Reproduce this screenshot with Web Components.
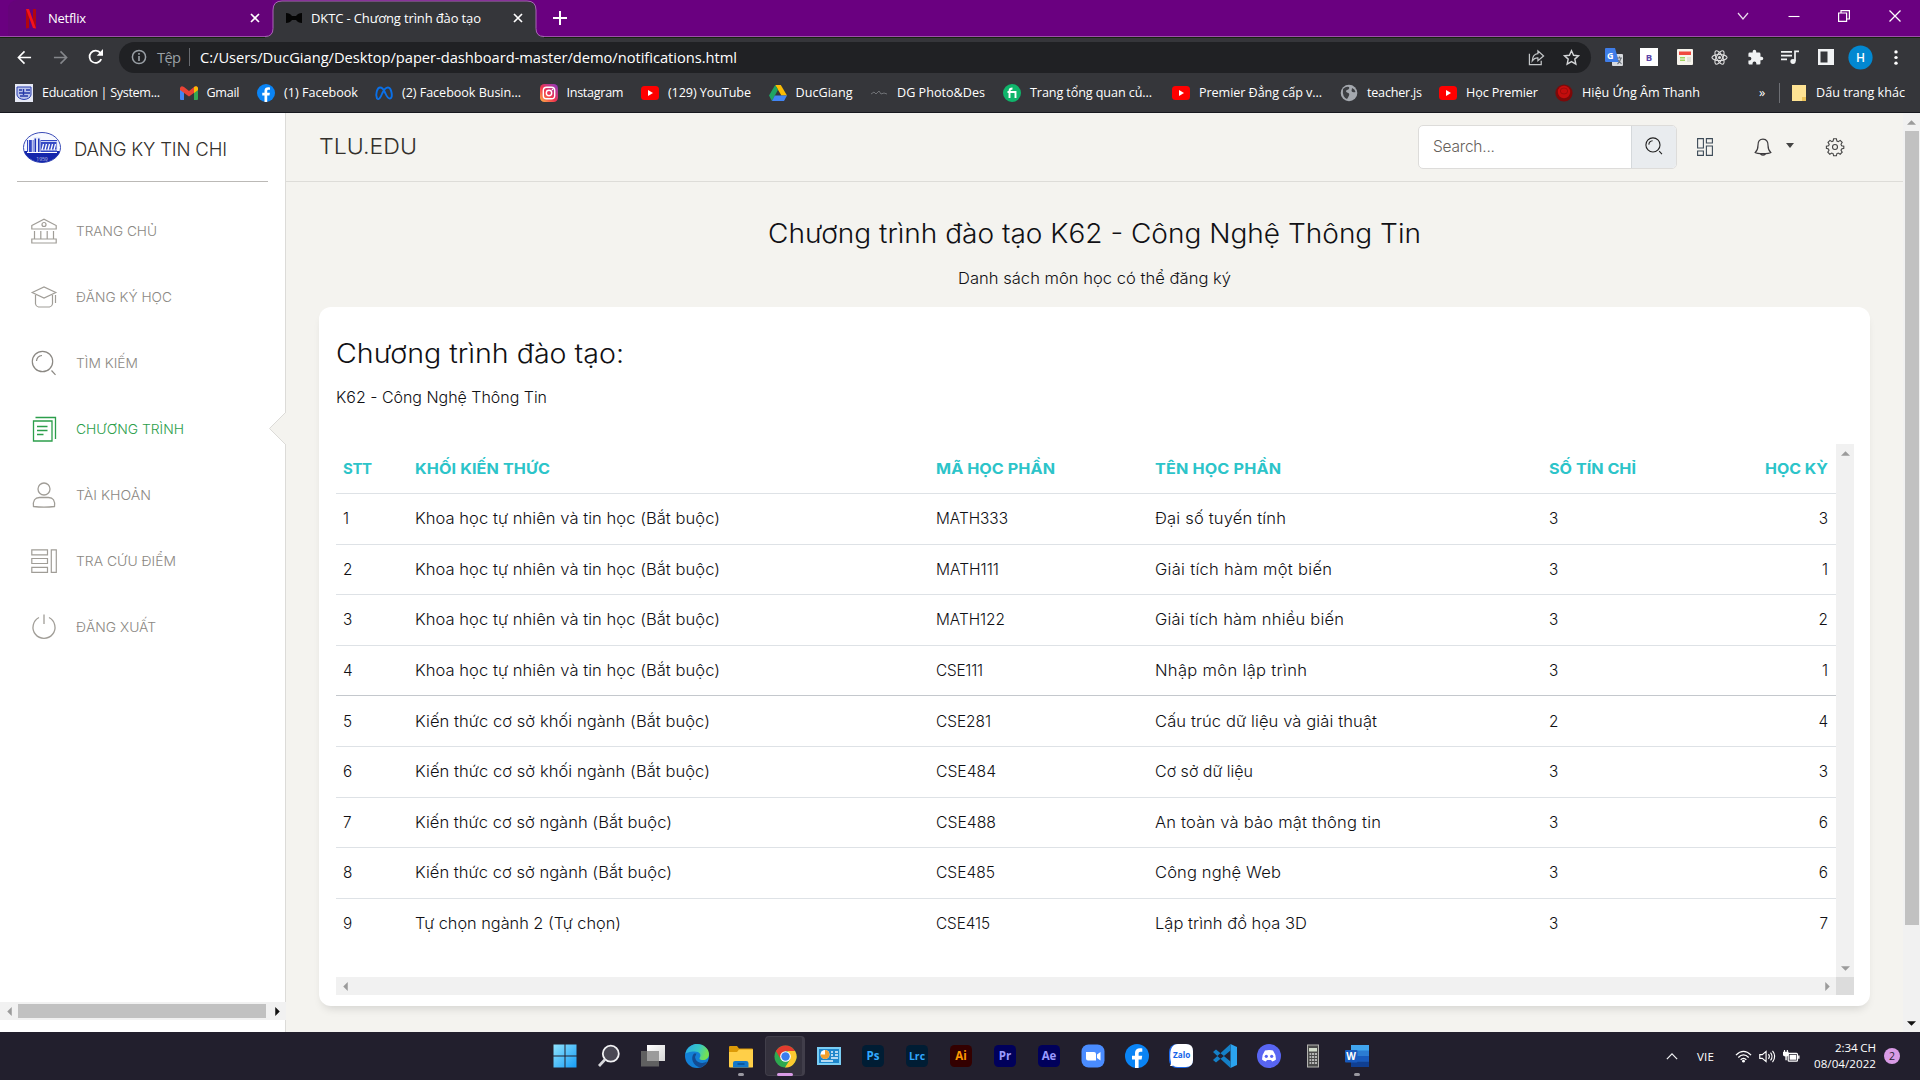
<!DOCTYPE html>
<html lang="vi">
<head>
<meta charset="utf-8">
<title>DKTC - Chương trình đào tạo</title>
<style>
html,body{margin:0;width:1920px;height:1080px;overflow:hidden}
body{display:flex;flex-direction:column;background:#f4f3ef;font-family:"Open Sans","Noto Sans",sans-serif}
</style>
</head>
<body>
<browser-tabs></browser-tabs>
<browser-toolbar></browser-toolbar>
<bookmark-bar></bookmark-bar>
<page-view>
  <side-bar slot="side"></side-bar>
  <nav-bar slot="nav"></nav-bar>
  <course-card slot="content"></course-card>
</page-view>
<task-bar></task-bar>
<script>
const YT='<rect y="2" width="18" height="14" rx="3.5" fill="#f00"/><path d="M7 6l5 3-5 3z" fill="#fff"/>';
const FB='<circle cx="12" cy="12" r="12" fill="#0a84f5"/><path d="M13.6 24v-8.6h3l.6-3.6h-3.6V9.6c0-1.200.6-1.900 2-1.900h1.700V4.500c-4.400-.8-7.300.5-7.300 4.600v2.700H7v3.600h3V24z" fill="#fff"/>';
const adobe=(bg,fg,t,s=11.5)=>'<rect x="1" y="1" width="22" height="22" rx="4.500" fill="'+bg+'"/><text x="12" y="16" text-anchor="middle" font-family="Open Sans" font-weight="700" font-size="'+s+'" fill="'+fg+'">'+t+'</text>';
const S=(d,c='#fff',w=1.5)=>'<path d="'+d+'" fill="none" stroke="'+c+'" stroke-width="'+w+'"/>';
const ICONS={
 netflix:['0 0 10 18','<path d="M0 0h3v18l-3 .4zM7 0h3v18.400L7 18z" fill="#b1060f"/><path d="M0 0h3l7 18.400-3-.4z" fill="#f5121d"/>'],
 bow:['0 0 16 12','<path d="M0 1q4 0 6 3h4q2-3 6-3v10q-4 0-6-3H6q-2 3-6 3z" fill="#050505"/>'],
 x:['0 0 10 10',S('M1 1l8 8M9 1l-8 8','#fff',1.700)],
 plus:['0 0 14 14',S('M7 0v14M0 7h14','#fff',2)],
 chev:['0 0 12 8',S('M1 1l5 6 5-6','#e9dcec',1.200)],
 min:['0 0 12 12',S('M.5 6.500h11','#fff',1.100)],
 restore:['0 0 12 12',S('M.6 3h8v8.400h-8zM3 3V.6h8.400V9H9','#fff',1.200)],
 close:['0 0 12 12',S('M.5.5l11 11M11.500.5l-11 11','#fff',1.300)],
 back:['0 0 16 16',S('M15 8H2M8 1.500L1.500 8 8 14.500','#fff',1.700)],
 fwd:['0 0 16 16',S('M1 8h13M8 1.500L14.500 8 8 14.500','#85878b',1.700)],
 reload:['0 0 16 16',S('M13.700 10.500A6.300 6.300 0 1 1 12.800 4','#fff',1.800)+'<path d="M15.500 0v7H9z" fill="#fff"/>'],
 info:['0 0 16 16','<circle cx="8" cy="8" r="6.600" fill="none" stroke="#9aa0a6" stroke-width="1.500"/><path d="M7.200 7h1.600v5H7.200zM7.200 4h1.600v1.700H7.200z" fill="#9aa0a6"/>'],
 share:['0 0 18 18',S('M1.500 5v11.500h12.500v-4','#c4c7c9',1.300)+S('M4.500 12.500q.5-7 6-7.500V2l6 5.500-6 5V9.500Q7 9 4.500 12.500z','#c4c7c9',1.300)],
 star:['0 0 18 18',S('M9 1.800l2.200 4.800 5.200.6-3.900 3.500 1.100 5.200L9 13.300l-4.600 2.600 1.100-5.200L1.600 7.200l5.200-.6z','#d4d6d8',1.500)],
 trans:['0 0 18 18','<rect x="7" y="6" width="11" height="12" rx="1" fill="#d8dade"/><path d="M0 1q0-1 1-1h9l4 14H1q-1 0-1-1z" fill="#3f7de8"/><text x="2" y="10.500" font-family="Open Sans" font-weight="700" font-size="9" fill="#fff">G</text>'+S('M12 10h5M14.500 8.500V10M16 10q-1 4-3.500 6M13 12l3.500 4','#6a7178',1.100)],
 bext:['0 0 18 18','<rect width="18" height="18" fill="#fff"/><text x="9" y="12.500" text-anchor="middle" font-family="Open Sans" font-weight="700" font-size="9.500" fill="#5b43a8">B</text>'],
 note:['0 0 16 16','<rect width="16" height="16" rx="1" fill="#f7f4ec"/><path d="M2 2.500h12v3.500H2z" fill="#f0483e"/><path d="M3 8h5v1.500H3zM3 10.500h5V12H3z" fill="#9fd45e"/><path d="M10 8h4v5h-4z" fill="#e2e2d8"/>'],
 react:['0 0 18 18','<g fill="none" stroke="#dcdcdc" stroke-width="1.200"><ellipse cx="9" cy="9" rx="8" ry="3.200"/><ellipse cx="9" cy="9" rx="8" ry="3.200" transform="rotate(60 9 9)"/><ellipse cx="9" cy="9" rx="8" ry="3.200" transform="rotate(120 9 9)"/></g><circle cx="9" cy="9" r="1.600" fill="#ddd"/>'],
 puzzle:['0 0 24 24','<path d="M20.500 11H19V7a2 2 0 0 0-2-2h-4V3.500a2.500 2.500 0 0 0-5 0V5H4a2 2 0 0 0-2 2v3.800h1.500a2.700 2.700 0 0 1 0 5.400H2V20c0 1.100.9 2 2 2h3.800v-1.500a2.700 2.700 0 0 1 5.400 0V22H17a2 2 0 0 0 2-2v-4h1.500a2.500 2.500 0 0 0 0-5z" fill="#f1f3f4"/>'],
 music:['0 0 18 16',S('M0 2h11M0 6h11M0 10h6','#f1f3f4',1.700)+S('M14 12V1.500h4','#f1f3f4',1.700)+'<circle cx="12" cy="12.300" r="2.600" fill="#f1f3f4"/>'],
 panel:['0 0 16 16','<path d="M0 0h16v16H0zM2.500 2.500v11h7v-11z" fill="#f1f3f4" fill-rule="evenodd"/>'],
 avatar:['0 0 26 26','<circle cx="13" cy="13" r="12.600" fill="#0288d1"/><text x="13" y="17.500" text-anchor="middle" font-family="Open Sans" font-size="12.500" font-weight="600" fill="#fff">H</text>'],
 dots:['0 0 4 16','<circle cx="2" cy="2" r="1.700" fill="#fff"/><circle cx="2" cy="8" r="1.700" fill="#fff"/><circle cx="2" cy="14" r="1.700" fill="#fff"/>'],
 edu:['0 0 18 18','<rect width="18" height="18" fill="#e6e9f5"/><path d="M2 3h14v8q-1 4-7 4.500Q3 15 2 11z" fill="#b9c3ea" stroke="#2a3fb0"/>'+S('M4 6h3M8.500 5v6M11 6h4M4 9h11M5 12h8','#2438a8',1.400)],
 gmail:['0 0 18 14','<path d="M0 2.500v10.500q0 1 1 1h3V5z" fill="#4285f4"/><path d="M18 2.500v10.500q0 1-1 1h-3V5z" fill="#34a853"/><path d="M0 2Q1-1 4 1l5 4 5-4q3-2 4 1v2L9 10.500 0 4z" fill="#ea4335"/><path d="M14 1q3-2 4 1v2l-4 3z" fill="#fbbc04"/>'],
 fb:['0 0 24 24',FB],
 meta:['0 0 18 14',S('M2 12.500C0 8 2.500 1.500 5 1.500c3.500 0 4 3 5.500 6 1.500 3.500 3 5 4.500 5 3.500 0 1.500-11-2-11-3 0-4.500 3-5.800 6-1.400 3.500-3.500 7-5.200 5z','#0a70e8',1.900)],
 insta:['0 0 18 18','<defs><linearGradient id="ig" x1="0" y1="1" x2="1" y2="0"><stop offset="0" stop-color="#fdb647"/><stop offset=".45" stop-color="#f0344d"/><stop offset="1" stop-color="#8a3ac8"/></linearGradient></defs><rect width="18" height="18" rx="4.500" fill="url(#ig)"/><rect x="3.300" y="3.300" width="11.400" height="11.400" rx="3.300" fill="none" stroke="#fff" stroke-width="1.400"/><circle cx="9" cy="9" r="2.700" fill="none" stroke="#fff" stroke-width="1.400"/><circle cx="12.500" cy="5.500" r=".8" fill="#fff"/>'],
 yt:['0 0 18 18',YT],
 drive:['0 0 18 16','<path d="M6.200 0h5.600L18 10.500h-5.600z" fill="#fbbc04"/><path d="M6.200 0L9 4.800 2.900 16 0 10.500z" fill="#1fa463"/><path d="M5.800 10.500H18L15 16H2.900z" fill="#4285f4"/>'],
 dg:['0 0 18 18',S('M1 10l3-2 2 2 3-3 2 3 3-1 3 1','#77797d',.9)],
 fi:['0 0 18 18','<circle cx="9" cy="9" r="9" fill="#10b56b"/>'+S('M6.500 14V7q0-2.500 3-2.500M4.500 8h8V14','#fff',1.900)],
 globe:['0 0 18 18','<circle cx="9" cy="9" r="8.300" fill="#a4a8ae"/><path d="M3 5q3-3 6-2 1 2-2 3-2 1 0 2.500 3 .5 2 3-1 2-2 3.500Q2 13 3 5zM12 4q3 1 3.500 4-3 1-4-1z" fill="#3d3f43"/>'],
 red:['0 0 18 18','<circle cx="9" cy="9" r="8.600" fill="#7d0909"/><circle cx="9" cy="8" r="6.200" fill="#c30d0d"/><ellipse cx="9" cy="7" rx="3.700" ry="3" fill="none" stroke="#8d0a0a" stroke-width=".7"/>'],
 folder:['0 0 14 16','<path d="M0 0h14v16H0z" fill="#fde293"/><path d="M10 16v-4h4v4z" fill="#edc45a"/>'],
 crest:['0 0 38 31','<defs><clipPath id="cc"><ellipse cx="19" cy="15.500" rx="18.500" ry="15"/></clipPath></defs><g clip-path="url(#cc)"><rect width="38" height="31" fill="#f7f9ff"/><rect y="19" width="38" height="12" fill="#1426ab"/><rect x="4" y="8" width="30" height="12" fill="#3348c4"/><rect x="10.500" y="5" width="7" height="16" fill="#e8ecfb"/></g>'+S('M5.500 8v12M9.300 8v12','#dfe4fa',1)+S('M12.300 6.500v14M15.800 6.500v14','#1d33b8',1.500)+S('M18 9.500h16v8.500H18','#dfe4fa',.9)+S('M20.500 12l-1.500 6M23.500 12l-1.500 6M26.500 12l-1.500 6M29.500 12l-1.500 6M32.500 12l-1.500 6','#fff',1.300)+S('M4 20.500h30','#fff',1)+'<text x="19" y="28.500" text-anchor="middle" font-size="5" font-family="Open Sans" fill="#fff">1959</text><ellipse cx="19" cy="15.500" rx="18.500" ry="15" fill="none" stroke="#2437ae" stroke-width=".9"/>'],
 bank:['0 0 26 26','<g fill="none" stroke="#a09d97" stroke-width="1.200"><path d="M.8 7.500L13 1.200l12.200 6.300V11H.8zM.8 21h24.400v4H.8zM3.500 13v8M9.800 13v8M16.200 13v8M22.500 13v8"/><circle cx="13" cy="6.500" r="2"/></g>'],
 hat:['0 0 26 26','<g fill="none" stroke="#a09d97" stroke-width="1.200"><path d="M1.200 8.500L13 3l11.800 5.500L13 14zM4.500 11v9q.5 2.500 3 3h11q2.500-.5 3-3v-9M24.500 11v8"/></g>'],
 search:['0 0 26 26','<g fill="none" stroke="currentColor" stroke-width="var(--sw,1.2)"><circle cx="11.500" cy="11.500" r="10.200"/><path d="M5.500 11q.5-5 5.500-5.500M20.500 20.500l4 4.300"/></g>'],
 paper:['0 0 26 26','<g fill="none" stroke="#2c9e4b" stroke-width="1.300"><path d="M2.500 5h18.500v20H2.500zM4.500 1.500h20V23"/><path d="M6 10.500h10.500M6 14.500h10.500M6 18.500h6.500" stroke-width="1.500"/></g>'],
 user:['0 0 26 26','<g fill="none" stroke="#a09d97" stroke-width="1.300"><circle cx="13" cy="7" r="6"/><path d="M2.500 24.500q-1-9 6-9h9q7 0 6 9-10.500 1.300-21 0z"/></g>'],
 rows:['0 0 26 26','<g fill="none" stroke="#a09d97" stroke-width="1.200"><path d="M.8 1.800h15.700v5H.8zM.8 10.500h15.700v5H.8zM.8 19.300h15.700v5H.8zM20.300 1.800h5v22.500h-5z"/></g>'],
 power:['0 0 26 26',S('M8 3.500a11 11 0 1 0 10 0M13 .5V10','#a09d97',1.300)],
 grid:['0 0 16 18','<g fill="none" stroke="#3c4a57" stroke-width="1.100"><path d="M.6.6h5.800v9.400H.6zM.6 13h5.800v4.400H.6zM9.400.6h6v4.400h-6zM9.400 8h6v9.400h-6z"/></g>'],
 bell:['0 0 18 19',S('M9 1.200c-4 0-5 3-5 6 0 4-.8 5.500-2.800 7.300 2 1.500 13.600 1.500 15.600 0C14.800 12.700 14 11.200 14 7.200c0-3-1-6-5-6zM6.500 16q2.500 2.500 5 0','#3d3b3e',1.200)],
 gear:['0 0 18 18','<circle cx="9" cy="9" r="2.500" fill="none" stroke="#444" stroke-width="1.100"/>'+S('M7.600.8h2.800l.5 2.200 1.400.6 1.900-1.200 2 2-1.200 1.900.6 1.400 2.200.5v2.200l-2.200.5-.6 1.400 1.200 1.900-2 2-1.900-1.200-1.400.6-.5 2.200H7.600l-.5-2.200-1.400-.6-1.900 1.200-2-2L3 12.300l-.6-1.400-2-.5V8.200l2.200-.5.600-1.400L2 4.400l2-2 1.900 1.200L7.100 3z','#444',1.100)],
 win:['0 0 24 24','<defs><linearGradient id="wg" x1="0" y1="0" x2="1" y2="1"><stop offset="0" stop-color="#8fe3fd"/><stop offset="1" stop-color="#169cf5"/></linearGradient></defs><path d="M.5.500h11v11h-11zM12.500.5h11v11h-11zM.5 12.500h11v11h-11zM12.500 12.500h11v11h-11z" fill="url(#wg)"/>'],
 find:['0 0 24 24','<circle cx="13.800" cy="9.700" r="8" fill="#4a4854" stroke="#f2f2f4" stroke-width="1.800"/>'+S('M8 15.500L2 22','#d8d8dc',2.700)],
 tasks:['0 0 24 24','<defs><linearGradient id="tg" x1="0" y1="0" x2="1" y2="1"><stop offset="0" stop-color="#fff"/><stop offset="1" stop-color="#d5d5d5"/></linearGradient></defs><rect x="6" y="1" width="18" height="16" fill="url(#tg)"/><rect x="0" y="7" width="18" height="15.500" fill="#666" opacity=".92"/><rect x="6" y="7" width="12" height="10" fill="#9b9b9b"/>'],
 edge:['0 0 24 24','<defs><linearGradient id="eg" x1="0" y1="0" x2="1" y2=".3"><stop offset="0" stop-color="#2aa7ea"/><stop offset=".6" stop-color="#37c8c3"/><stop offset="1" stop-color="#74e052"/></linearGradient></defs><circle cx="12" cy="12" r="12" fill="#1380d6"/><path d="M.3 10C2 2.500 8 0 12 0c7 0 12 5 12 10 0 4-3 6-6 6-3.500 0-4-1.500-3.200-2.500C16.500 11 15 7.500 9.500 7.500 4.500 7.500 1 9 .3 10z" fill="url(#eg)"/><path d="M9 9.500C5 14 8 21.500 15 23.600c3-.7 6-3.600 7.200-6.100-4 2.500-9.700 1.500-11.500-2Q9.400 12.500 11.500 9.500z" fill="#134b91"/>'],
 files:['0 0 24 24','<path d="M0 3q0-1 1-1h7l2 2.500h13q1 0 1 1V10H0z" fill="#dc9a08"/><path d="M0 8h8l2-2.500h14V23q-.2.500-1 .5H1q-1 0-1-1z" fill="#ffcf48"/><path d="M4 23.500V19q0-2 2-2h11q2.500 0 2.500 2v4.500z" fill="#1478c9"/><path d="M8.500 20h7" stroke="#0a4f91" stroke-width="1.500"/>'],
 chrome:['0 0 24 24','<circle cx="12" cy="12" r="11.500" fill="#2da94f"/><path d="M2 6.300A11.500 11.500 0 0 1 22 6.300H12L7 14.500z" fill="#e33b2e"/><path d="M22 6.300A11.500 11.500 0 0 1 11.500 23.500L17 14.500 14 6.300z" fill="#fdc92f"/><circle cx="12" cy="12" r="5.600" fill="#fff"/><circle cx="12" cy="12" r="4.400" fill="#3b7ded"/>'],
 board:['0 0 24 24','<rect y="3" width="24" height="18" fill="#79cdf4"/><rect x="2" y="5" width="20" height="14" fill="#1e86cb"/><circle cx="8" cy="10.500" r="4.500" fill="#fff"/><path d="M8 10.500V6a4.500 4.500 0 1 1-4.500 4.500z" fill="#f2a02e"/>'+S('M14 8h2M18 8h3M14 11h2M18 11h3M14 14h7M4 17h12','#e7f6ff',1.300)],
 ps:['0 0 24 24',adobe('#001d34','#31a8ff','Ps')],lrc:['0 0 24 24',adobe('#001d34','#31a8ff','Lrc',10.500)],ai:['0 0 24 24',adobe('#330000','#ff9a00','Ai')],pr:['0 0 24 24',adobe('#00005b','#9999ff','Pr')],ae:['0 0 24 24',adobe('#00005b','#9999ff','Ae')],
 zoom:['0 0 24 24','<rect x=".5" y=".5" width="23" height="23" rx="7" fill="#4a8cff"/><path d="M5 8h8q2 0 2 2v6.500H7q-2 0-2-2zM16 10.500L19.500 8v8.500L16 14z" fill="#fff"/>'],
 zalo:['0 0 24 24','<rect width="24" height="24" rx="8" fill="#1c68e8"/><path d="M9 0h8q7 0 7 7v9q0 7-7 7H9q-3 0-5-1.500-1 .7-3 .5 1.500-1.500 1-4Q1.200 15 1.200 12q0-12 7.800-12z" fill="#fff"/><text x="12.700" y="14.300" text-anchor="middle" font-family="Open Sans" font-weight="700" font-size="8.200" fill="#1464e8">Zalo</text>'],
 vs:['0 0 24 24','<path d="M17.500 0L24 3v18l-6.500 3z" fill="#2ba3ee"/><path d="M17.500 0v6.500L3 18.500 0 16zM17.500 24v-6.500L3 5.500 0 8z" fill="#1580c7"/>'],
 discord:['0 0 24 24','<circle cx="12" cy="12" r="12" fill="#5865f2"/><path d="M8 6.500q4-1 8 0 3 4 3 9-1.700 1.700-3.800 2L14 16h-4l-1.200 1.500q-2.100-.3-3.800-2 0-5 3-9z" fill="#fff"/><circle cx="9.300" cy="12.300" r="1.600" fill="#5865f2"/><circle cx="14.700" cy="12.300" r="1.600" fill="#5865f2"/>'],
 calc:['0 0 24 24','<rect x="6.500" y="1" width="11" height="22" fill="#4b4b4b" stroke="#b4b4b0"/><rect x="8" y="4" width="8" height="3.500" fill="#d3dccb"/>'+S('M8.500 10h7.500M8.500 13h7.500M8.500 16h7.500M8.500 19h7.500','#d9d9d9',1.500)+S('M10.500 9v12M13.500 9v12','#4b4b4b',.8)],
 word:['0 0 24 24','<rect x="6" y="1" width="18" height="22" rx="1" fill="#2b7cd3"/><rect x="6" y="1" width="18" height="5.500" fill="#41a5ee"/><rect x="6" y="12" width="18" height="5.500" fill="#185abd"/><rect x="6" y="17.500" width="18" height="5.500" fill="#103f91"/><rect y="6" width="12.500" height="12.500" rx="1" fill="#185abd"/><text x="6.200" y="16" text-anchor="middle" font-family="Open Sans" font-weight="700" font-size="10" fill="#fff">W</text>'],
 up:['0 0 14 8',S('M1 7l6-6 6 6','#f3f3f5',1.400)],
 wifi:['0 0 18 14',S('M1 5.500q8-8 16 0M3.500 8q5.500-5.500 11 0M6 10.500q3-3 6 0','#fff',1.400)+'<circle cx="9" cy="12" r="1.500" fill="#fff"/>'],
 sound:['0 0 18 14',S('M.8 5v4h2.700L7.500 12.500v-11L3.500 5zM10 4.500q2 2.500 0 5M12.200 2.800q3.300 4.200 0 8.400M14.300 1q4.700 6 0 12','#fff',1.200)],
 batt:['0 0 18 14','<rect x="5.500" y="3.600" width="9.800" height="8.400" rx="1" fill="none" stroke="#fff" stroke-width="1.300"/><path d="M7 5h7v5.500H7zM16 6h1.500v3.500H16zM0 2h6v3.500q0 1.500-2 1.500v4H2.500V7Q0 7 0 5.500zM1 0h1.200v2H1zM4 0h1.200v2H4z" fill="#fff"/>']
};
class Base extends HTMLElement{
  constructor(){super();this.attachShadow({mode:'open'})}
  connectedCallback(){this.shadowRoot.innerHTML=this.render()}
}
class UiIcon extends Base{
  render(){
    const [vb,body]=ICONS[this.getAttribute('name')];
    const w=this.getAttribute('w'),h=this.getAttribute('h')||w;
    return '<style>:host{display:block;flex:none;line-height:0}svg{display:block;overflow:visible}</style><svg width="'+w+'" height="'+h+'" viewBox="'+vb+'" preserveAspectRatio="none">'+body+'</svg>';
  }
}
/* single line of text occupying exactly w pixels: glyphs widen up to --stretch, tracking takes the rest */
class FitText extends Base{
  render(){return '<style>:host{display:inline-block;white-space:nowrap;flex:none;text-align:left}span{display:inline-block;transform-origin:0 50%}</style><span><slot></slot></span>'}
  connectedCallback(){
    super.connectedCallback();
    const w=+this.getAttribute('w');
    if(!w)return;
    const s=this.shadowRoot.querySelector('span');
    const n=[...this.textContent].length;
    const nat=s.getBoundingClientRect().width;
    const max=+getComputedStyle(this).getPropertyValue('--stretch')||1;
    const k=Math.max(1,Math.min(max,w/nat));
    s.style.letterSpacing=((w/k-nat)/Math.max(1,n-1)).toFixed(3)+'px';
    if(k>1)s.style.transform='scaleX('+k.toFixed(4)+')';
    this.style.width=w+'px';
  }
}
const T=(t,w,c='')=>'<fit-text class="'+c+'" w="'+w+'">'+t.replace(/&/g,'&amp;')+'</fit-text>';
const I=(n,w,h=w)=>'<ui-icon name="'+n+'" w="'+w+'" h="'+h+'"></ui-icon>';

class BrowserTabs extends Base{
  render(){return `<style>
  :host{display:flex;height:36px;background:#6a0080;border-bottom:1px solid #9d50ab;box-shadow:0 1px 0 #14260f;color:#fff;font-size:13px;padding-left:8px;position:relative;z-index:1;flex:none}
  .tab{display:flex;align-items:center;box-sizing:border-box;width:264px;height:36px;padding:0 12px 0 18px;position:relative}
  .tab.idle{background:#650379;border-radius:9px 0 0 0}
  .tab.on{padding-left:14px;padding-right:13px}
  .shape{position:absolute;left:-7px;top:0}
  .tab>*{position:relative}.tab>.shape{position:absolute}
  .lab{margin-left:13px;flex:1}.idle .lab{margin-left:12px}.on .lab{margin-left:9px}
  .plus{display:flex;align-items:center;margin-left:17px}
  .ctl{display:flex;align-items:center;margin-left:auto;width:202px;padding-bottom:5px}
  .ctl span{width:50.600px;display:flex;justify-content:center}
  </style>
  <div class="tab idle">${I('netflix',10,19)}<span class="lab">${T('Netflix',38)}</span>${I('x',10)}</div>
  <div class="tab on"><svg class="shape" width="280" height="38"><path d="M0 38V36.500q8 0 8-8V10q0-9 9-9H262q9 0 9 9v18.500q0 8 8 8V38z" fill="#35363a"/><path d="M0 36.500q8 0 8-8V10q0-9 9-9H262q9 0 9 9v18.500q0 8 8 8" fill="none" stroke="#a967b5"/></svg>${I('bow',16,12)}<span class="lab">${T('DKTC - Chương trình đào tạo',170)}</span>${I('x',10)}</div>
  <div class="plus">${I('plus',14)}</div>
  <div class="ctl"><span>${I('chev',12,8)}</span><span>${I('min',12)}</span><span>${I('restore',12)}</span><span>${I('close',12)}</span></div>`}
}
class BrowserToolbar extends Base{
  render(){return `<style>
  :host{display:flex;align-items:center;height:40px;background:#35363a;padding-left:7px;flex:none;color:#fff}
  .b{width:35.500px;display:flex;justify-content:center}
  .omni{display:flex;align-items:center;box-sizing:border-box;width:1472px;height:31px;margin:0 5.500px;border-radius:16px;background:#202124;padding:0 11px 0 12px;font-size:14.700px}
  .omni .f{color:#9aa0a6;margin-left:10px}
  .sep{width:1px;height:18px;background:#696b70;margin:0 10px 0 8px}
  .end{margin-left:auto;display:flex;gap:18px}
  .e{width:35.250px;display:flex;justify-content:center}
  </style>
  <span class="b">${I('back',15)}</span><span class="b">${I('fwd',15)}</span><span class="b">${I('reload',15.5)}</span>
  <div class="omni">${I('info',16)}${T('Tệp',24,'f')}<i class="sep"></i>${T('C:/Users/DucGiang/Desktop/paper-dashboard-master/demo/notifications.html',537)}<span class="end">${I('share',17)}${I('star',17)}</span></div>
  ${[['trans',18],['bext',18],['note',16],['react',17],['puzzle',17],['music',18,15],['panel',16],['avatar',25],['dots',4,15]].map(a=>'<span class="e">'+I(...a)+'</span>').join('')}`}
}
class BookmarkBar extends Base{
  render(){
    const B=[[15,'edu','Education | System...',118],[179.5,'gmail','Gmail',33],[257,'fb','(1) Facebook',74],[375,'meta','(2) Facebook Busin...',119],[539.5,'insta','Instagram',57],[641,'yt','(129) YouTube',83],[768.5,'drive','DucGiang',57],[870,'dg','DG Photo&Des',88],[1003,'fi','Trang tổng quan củ...',122],[1172,'yt','Premier Đẳng cấp v...',123],[1340,'globe','teacher.js',55],[1439,'yt','Học Premier',72],[1555,'red','Hiệu Ứng Âm Thanh',118],[1759]];
    const H={gmail:14,meta:14,drive:16};
    return `<style>
    :host{display:flex;align-items:center;box-sizing:border-box;height:36px;padding:0 0 3px 15px;background:#35363a;border-bottom:1px solid #16181f;color:#fff;font-size:12.600px;flex:none}
    .bm{display:flex;align-items:center;gap:9px;flex:none}
    .bm fit-text{margin-top:-1px}
    .more{width:20px;margin-top:-2px}.sep{width:1px;height:20px;background:#6d6f74;margin-right:12px}
    .fo{display:flex;align-items:center;gap:10px}
    .fo fit-text{margin-top:-1px}
    </style>`+B.slice(0,-1).map((b,i)=>'<div class="bm" style="width:'+(B[i+1][0]-b[0])+'px">'+I(b[1],18,H[b[1]]||18)+T(b[2],b[3])+'</div>').join('')+`<span class="more">»</span><i class="sep"></i><div class="fo">${I('folder',14,16)}${T('Dấu trang khác',89)}</div>`}
}
class SbArrow extends Base{
  render(){
    const d={up:'M0 6l5-5 5 5z',down:'M0 1l5 5 5-5z',left:'M6 0L1 5l5 5z',right:'M1 0l5 5-5 5z'}[this.getAttribute('dir')];
    const vert=/up|down/.test(this.getAttribute('dir'));
    return '<style>:host{display:flex;align-items:center;justify-content:center;width:18px;height:18px;flex:none}</style><svg width="9" height="9" viewBox="'+(vert?'0 -1.5':'-1.5 0')+' 10 10"><path d="'+d+'" fill="'+(this.getAttribute('tone')||'#9b9b9b')+'"/></svg>';
  }
}
class PageView extends Base{
  render(){return `<style>
  :host{display:flex;height:919px;flex:none;background:#f4f3ef;font-family:Inter,"Open Sans",sans-serif;font-weight:300;color:#101014;--stretch:1.08}
  .main{width:1617px;display:flex;flex-direction:column;align-items:stretch}
  .bar{width:17px;background:#f1f1f1;display:flex;flex-direction:column;align-items:center}
  .bar i{width:14px;height:794px;background:#c1c1c1}.bar sb-arrow:last-child{margin-top:auto}
  h4,p{margin:0;text-align:center}
  h4{font-size:26.500px;font-weight:300;line-height:34px;margin-top:34px}
  p{font-size:15.300px;line-height:24px;margin-top:17px;margin-bottom:16px}
  </style><slot name="side"></slot><div class="main"><slot name="nav"></slot>
  <h4>${T('Chương trình đào tạo K62 - Công Nghệ Thông Tin',653)}</h4><p>${T('Danh sách môn học có thể đăng ký',273)}</p>
  <slot name="content"></slot></div>
  <div class="bar"><sb-arrow dir="up"></sb-arrow><i></i><sb-arrow dir="down" tone="#111"></sb-arrow></div>`}
}
class SideBar extends Base{
  render(){
    const N=[['bank','TRANG CHỦ',81],['hat','ĐĂNG KÝ HỌC',96],['search','TÌM KIẾM',62],['paper','CHƯƠNG TRÌNH',108],['user','TÀI KHOẢN',75],['rows','TRA CỨU ĐIỂM',100],['power','ĐĂNG XUẤT',80]];
    return `<style>
    :host{display:flex;flex-direction:column;width:286px;box-sizing:border-box;background:#fff;border-right:1px solid #dcdbd8;flex:none}
    .logo{display:flex;align-items:center;margin:0 17px;height:68px;border-bottom:1px solid #bbb9b6;padding-left:6px;width:245px;box-sizing:content-box}
    .logo fit-text{margin-left:13px;font-size:18.500px;color:#33302c;padding-top:4px}
    nav{display:flex;flex-direction:column;margin-top:16px}
    .n{display:flex;align-items:center;height:66px;padding-left:31px;gap:19px;color:#8b8883;font-size:13.600px;position:relative}
    .n.on{color:#2c9e4b}
    .tip{position:absolute;left:269px;top:16px}
    .hs{margin-top:auto;margin-bottom:12px;height:18px;width:286px;display:flex;align-items:center;background:#f1f1f1}
    .hs i{flex:1;height:14px;background:#c1c1c1;margin-right:2px}
    </style><div class="logo">${I('crest',38,31)}${T('DANG KY TIN CHI',153)}</div>
    <nav>${N.map(n=>'<div class="n'+(n[0]=='paper'?' on':'')+'">'+I(n[0],26)+T(n[1],n[2])+(n[0]=='paper'?'<svg class="tip" width="18" height="34"><path d="M17 0L.5 16.500 17 33v1h1V0z" fill="#f4f3ef"/><path d="M17 0L.5 16.500 17 33" fill="none" stroke="#dcdbd8"/></svg>':'')+'</div>').join('')}</nav>
    <div class="hs"><sb-arrow dir="left"></sb-arrow><i></i><sb-arrow dir="right" tone="#111"></sb-arrow></div>`}
}
class NavBar extends Base{
  render(){return `<style>
  :host{display:flex;align-items:center;box-sizing:border-box;height:69px;border-bottom:1px solid #dddcd8;padding-left:33px;color:#33302c}
  .t{font-size:22px;padding-bottom:2px}
  .s{display:flex;box-sizing:border-box;width:259px;height:44px;margin-left:1001px;margin-bottom:1px;border:1px solid #dddcda;border-radius:5px;background:#fff;overflow:hidden;font-size:15.500px;color:#66615b;--sw:1.6}
  .s .q{flex:1;display:flex;align-items:center;padding-left:14px}
  .s .m{width:45px;background:#e9ecef;border-left:1px solid #d5d9dc;display:flex;align-items:center;justify-content:center;color:#222;box-sizing:border-box;padding-bottom:2px}
  .g{margin-left:20px}.b{margin-left:41px}.c{width:0;border:4.500px solid transparent;border-top:5px solid #444;border-bottom:0;margin:-3px 0 0 14px}.w{margin-left:32px}
  </style>${T('TLU.EDU',98,'t')}<div class="s"><span class="q">${T('Search...',62)}</span><span class="m">${I('search',18)}</span></div>
  <span class="g">${I('grid',16,18)}</span><span class="b">${I('bell',18,19)}</span><i class="c"></i><span class="w">${I('gear',18)}</span>`}
}
class CourseCard extends Base{
  render(){return `<style>
  :host{display:flex;flex-direction:column;box-sizing:border-box;width:1551px;height:699px;margin-left:33px;background:#fff;border-radius:12px;box-shadow:0 6px 10px -4px rgba(0,0,0,.15);padding:29px 16px 0 17px}
  h4{margin:0;font-size:26.500px;font-weight:300;line-height:34px}
  p{margin:16px 0 0;font-size:15.300px;line-height:24px}
  .box{margin-top:34px;display:grid;grid-template-columns:1500px 18px;grid-template-rows:533px 18px}
  .v{background:#f1f1f1;display:flex;flex-direction:column;justify-content:space-between}
  .h{background:#f1f1f1;display:flex;justify-content:space-between}
  .k{background:#dcdcdc}
  </style><h4>${T('Chương trình đào tạo:',288)}</h4><p>${T('K62 - Công Nghệ Thông Tin',211)}</p>
  <div class="box"><course-table></course-table><div class="v"><sb-arrow dir="up"></sb-arrow><sb-arrow dir="down"></sb-arrow></div>
  <div class="h"><sb-arrow dir="left"></sb-arrow><sb-arrow dir="right"></sb-arrow></div><div class="k"></div></div>`}
}
class CourseTable extends Base{
  render(){
    const a=['Khoa học tự nhiên và tin học (Bắt buộc)',305],b=['Kiến thức cơ sở khối ngành (Bắt buộc)',295],c=['Kiến thức cơ sở ngành (Bắt buộc)',257],d=['Tự chọn ngành 2 (Tự chọn)',206];
    const R=[[a,['MATH333',72],['Đại số tuyến tính',131],3,3],[a,['MATH111',63],['Giải tích hàm một biến',177],3,1],[a,['MATH122',69],['Giải tích hàm nhiều biến',189],3,2],[a,['CSE111',47],['Nhập môn lập trình',152],3,1],[b,['CSE281',55],['Cấu trúc dữ liệu và giải thuật',222],2,4],[b,['CSE484',60],['Cơ sở dữ liệu',98],3,3],[c,['CSE488',60],['An toàn và bảo mật thông tin',226],3,6],[c,['CSE485',59],['Công nghệ Web',126],3,6],[d,['CSE415',54],['Lập trình đồ họa 3D',152],3,7]];
    return `<style>
    :host{display:block;font-size:15.300px}
    .r{display:grid;grid-template-columns:72px 521px 219px 394px 150px 1fr;align-items:center;box-sizing:border-box;height:50.600px;padding:0 8px 0 7px}
    .r+.r{border-top:1px solid #dee2e6}
    .r>span{display:flex}
    .r>span:last-child{justify-content:flex-end}
    .hd{height:49px;color:#2cc4c9;font-weight:700;font-size:15px}
    .r:nth-child(7){border-top-color:#c4c8cd}
    </style><div class="r hd">${[['STT',29],['KHỐI KIẾN THỨC',135],['MÃ HỌC PHẦN',119],['TÊN HỌC PHẦN',126],['SỐ TÍN CHỈ',87],['HỌC KỲ',63]].map(x=>'<span>'+T(...x)+'</span>').join('')}</div>`+
    R.map((r,i)=>'<div class="r"><span>'+(i+1)+'</span>'+r.map(x=>'<span>'+(Array.isArray(x)?T(...x):x)+'</span>').join('')+'</div>').join('')}
}
class TaskBar extends Base{
  render(){
    const A=['win','find','tasks','edge','files','chrome','board','ps','lrc','ai','pr','ae','zoom','fb','zalo','vs','discord','calc','word'];
    return `<style>
    :host{display:flex;height:48px;background:#221f2d;color:#fff;font-size:11.600px;flex:none;padding-left:543px}
    .a{width:44px;height:48px;display:flex;align-items:center;justify-content:center;position:relative;flex:none;z-index:0}
    .chrome:before{content:"";position:absolute;left:2px;top:4px;width:36px;height:38px;border-radius:4px;background:#34313d;border:1px solid #413e4a;border-right-width:3px;z-index:-1}
    .a u{position:absolute;bottom:4px;left:19px;width:6px;height:3px;border-radius:2px;background:#9a98a0}
    .a.chrome u{left:14px;width:16px;background:#d99be6}
    .tray{margin-left:auto;display:flex;align-items:center;padding-right:20px}
    .v{margin:1px 21px 0 19px}.ic{display:flex;gap:7px}
    .clock{display:flex;flex-direction:column;align-items:flex-end;line-height:16px;margin:0 8px 0 14px;width:62px}
    .bd{width:16px;height:16px;border-radius:50%;background:#d99be6;color:#2a1d33;text-align:center;line-height:16px;font-size:10.500px}
    </style>`+A.map(n=>'<span class="a '+n+'">'+I(n,n=='chrome'?23:24)+(/files|chrome|word/.test(n)?'<u></u>':'')+'</span>').join('')+
    `<div class="tray">${I('up',12,7)}${T('VIE',17,'v')}<span class="ic">${I('wifi',17,13)}${I('sound',17,13)}${I('batt',17,13)}</span><div class="clock">${T('2:34 CH',41)}${T('08/04/2022',62)}</div><span class="bd">2</span></div>`}
}
[['ui-icon',UiIcon],['browser-tabs',BrowserTabs],['browser-toolbar',BrowserToolbar],['bookmark-bar',BookmarkBar],['sb-arrow',SbArrow],['page-view',PageView],['side-bar',SideBar],['nav-bar',NavBar],['course-card',CourseCard],['course-table',CourseTable],['task-bar',TaskBar],['fit-text',FitText]].forEach(([n,c])=>customElements.define(n,c));
</script>
</body>
</html>
